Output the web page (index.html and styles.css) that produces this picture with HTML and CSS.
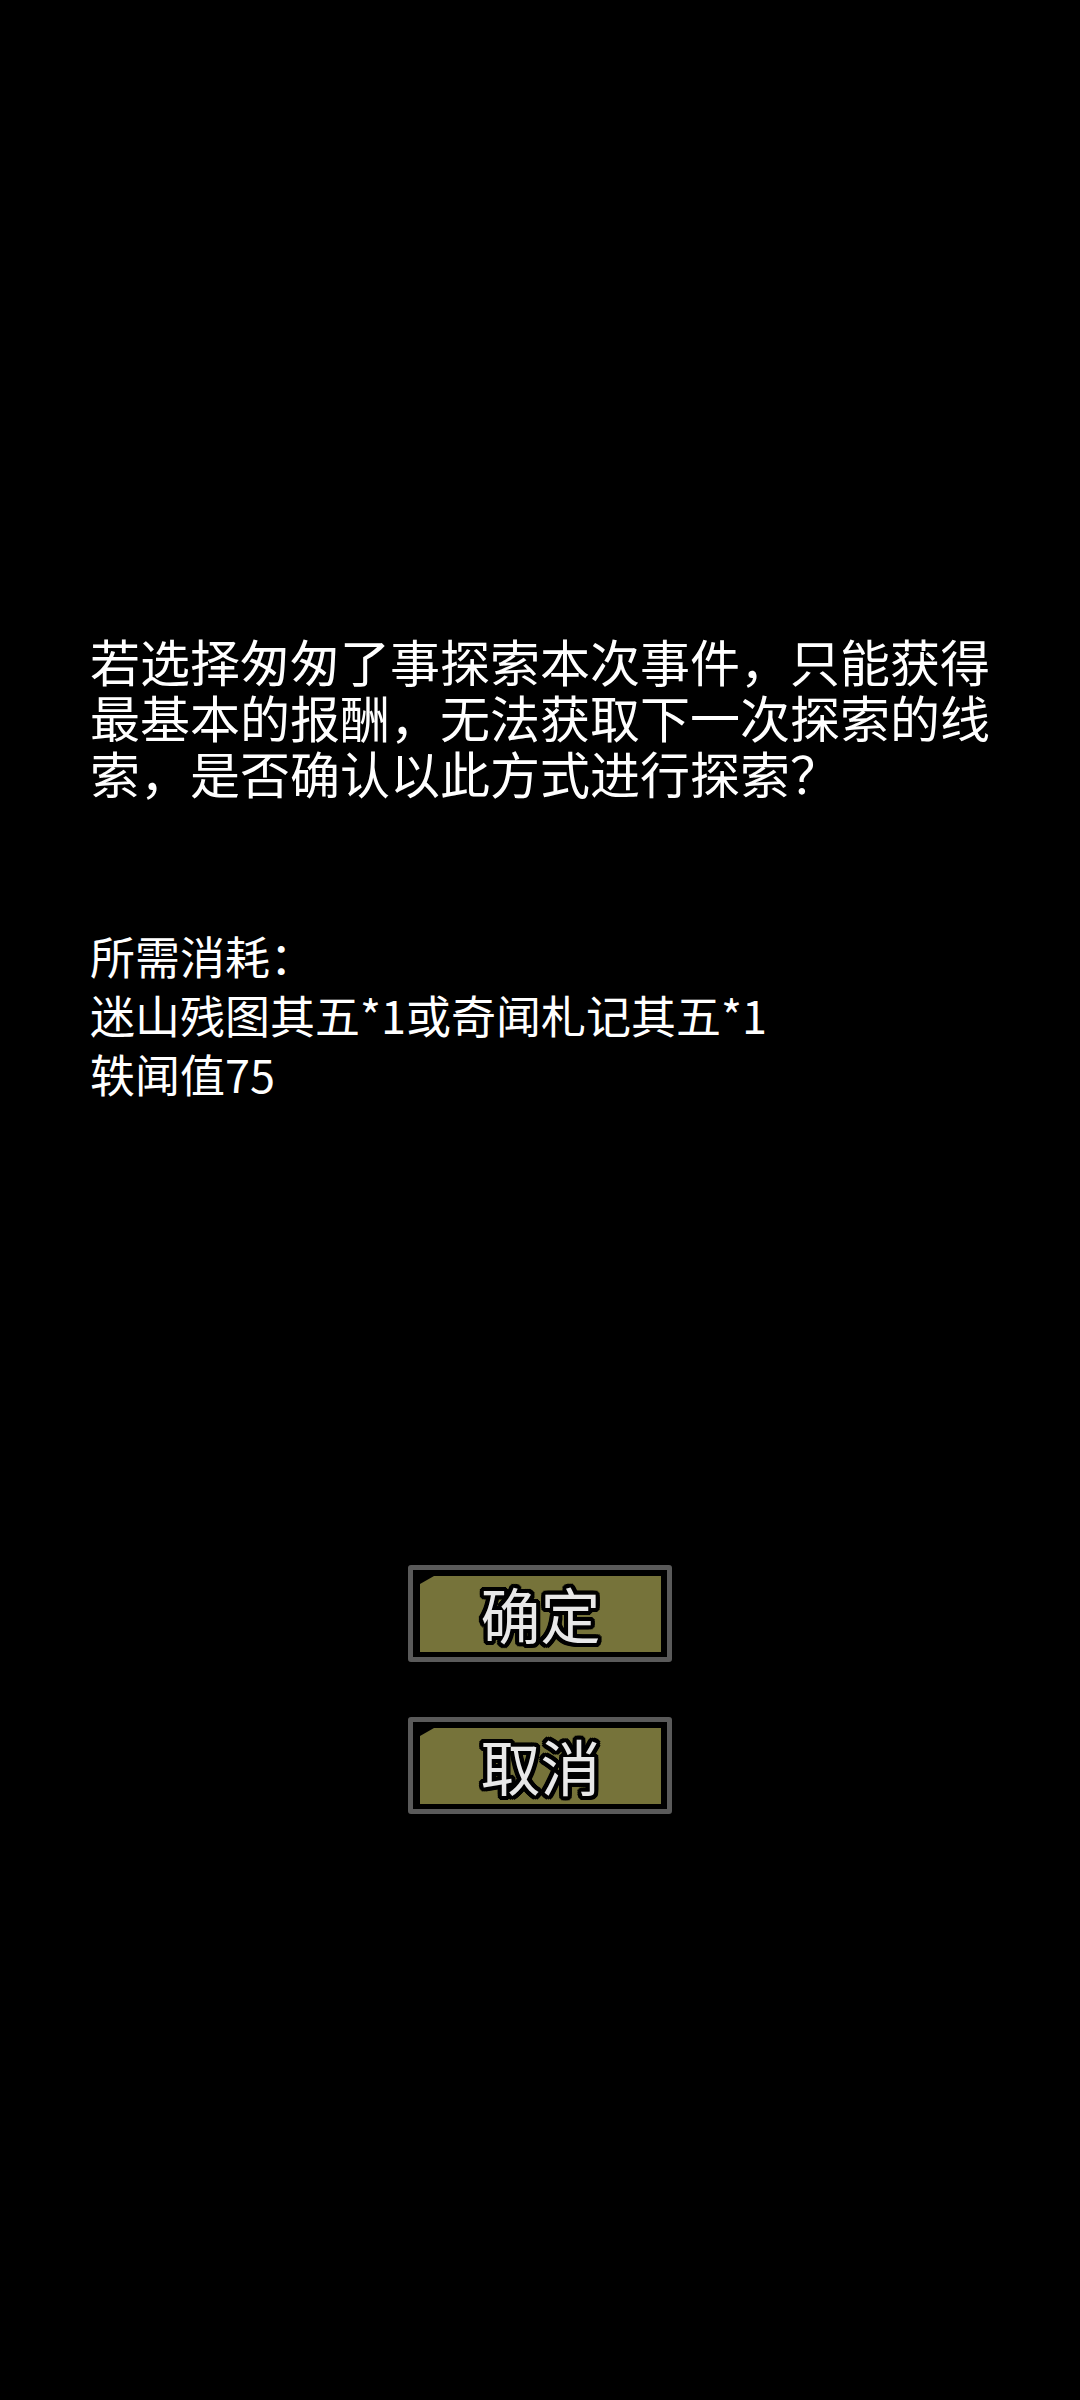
FILE: index.html
```html
<!DOCTYPE html>
<html lang="zh-CN">
<head>
    <meta charset="UTF-8">
    <meta name="viewport" content="width=device-width, initial-scale=1.0">
    <title>探索确认</title>
    <link rel="stylesheet" href="styles.css">
</head>
<body>
    <div class="dialog">
        <p class="message">若选择匆匆了事探索本次事件，只能获得最基本的报酬，无法获取下一次探索的线索，是否确认以此方式进行探索？</p>

        <div class="cost">
            <div class="cost-line">所需消耗：</div>
            <div class="cost-line">迷山残图其五*1或奇闻札记其五*1</div>
            <div class="cost-line">轶闻值75</div>
        </div>

        <div class="actions">
            <button class="btn"><span class="btn-face">确定</span></button>
            <button class="btn"><span class="btn-face">取消</span></button>
        </div>
    </div>
</body>
</html>
```

FILE: styles.css
```css
body {
    margin: 0;
    padding: 0;
    background-color: #000000;
    color: #ffffff;
    font-family: "Noto Sans CJK SC", "Noto Sans", sans-serif;
    width: 1080px;
    height: 2400px;
    overflow: hidden;
}

.dialog {
    padding: 632px 0 0 90px;
}

.message {
    margin: 0;
    width: 920px;
    font-size: 50px;
    line-height: 56px;
}

.cost {
    margin-top: 126px;
    font-size: 45px;
    line-height: 59px;
}

.actions {
    margin-top: 462px;
    margin-left: -90px;
    display: flex;
    flex-direction: column;
    align-items: center;
    gap: 55px;
}

.btn {
    width: 264px;
    height: 97px;
    box-sizing: border-box;
    padding: 6px 6px 5px 7px;
    border: 5px solid #5a5a5a;
    border-radius: 3px;
    background-color: #000000;
    cursor: pointer;
    display: flex;
}

.btn-face {
    flex: 1;
    display: flex;
    justify-content: center;
    align-items: center;
    background-color: #76733a;
    clip-path: polygon(0 8px, 14px 0, 100% 0, 100% 100%, 0 100%);
    color: #e8e8e8;
    font-family: "Noto Sans CJK SC", sans-serif;
    font-weight: 400;
    font-size: 60px;
    line-height: 1;
    padding-bottom: 2px;
    text-shadow:
        -3px 0 0 #000, 3px 0 0 #000, 0 -3px 0 #000, 0 3px 0 #000,
        -3px -3px 0 #000, 3px -3px 0 #000, -3px 3px 0 #000, 3px 3px 0 #000,
        -4px 0 0 #000, 4px 0 0 #000, 0 -4px 0 #000, 0 4px 0 #000,
        -2px -4px 0 #000, 2px -4px 0 #000, -2px 4px 0 #000, 2px 4px 0 #000,
        -4px -2px 0 #000, 4px -2px 0 #000, -4px 2px 0 #000, 4px 2px 0 #000;
}
```
